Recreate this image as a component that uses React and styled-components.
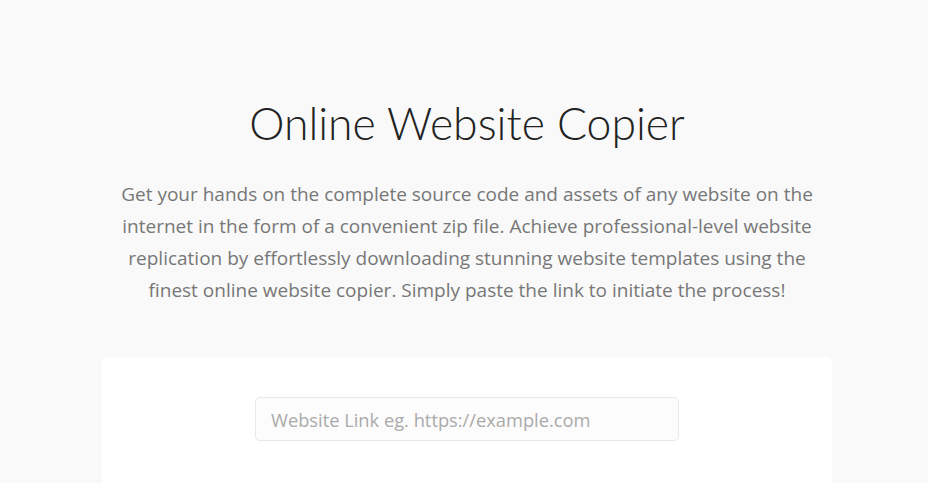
import styled, { createGlobalStyle } from 'styled-components';

const GlobalStyle = createGlobalStyle`
  body {
    margin: 0;
    background: #f9f9f9;
    font-family: "Open Sans", "Liberation Sans", sans-serif;
  }
`;

const Page = styled.main`
  display: flex;
  flex-direction: column;
  align-items: center;
  padding: 94px 0 0 6px;
`;

const Title = styled.h1`
  margin: 0;
  font-family: "Lato", "Open Sans", sans-serif;
  font-weight: 300;
  font-size: 44.5px;
  line-height: 58px;
  color: #222;
`;

const Lead = styled.p`
  margin: 26px 0 0;
  width: 720px;
  text-align: center;
  font-size: 19px;
  line-height: 32px;
  color: #777;
`;

const Card = styled.section`
  margin-top: 51px;
  width: 730px;
  box-sizing: border-box;
  background: #fff;
  border-radius: 6px;
  padding: 40px 0 60px;
  display: flex;
  justify-content: center;
`;

const LinkInput = styled.input`
  width: 424px;
  height: 44px;
  box-sizing: border-box;
  padding: 0 15px;
  border: 1px solid #e8e8e8;
  border-radius: 5px;
  background: #fcfcfc;
  font-family: "Open Sans", sans-serif;
  font-size: 18.3px;
  color: #444;
  outline: none;

  &::placeholder {
    color: #aaa;
  }
`;

export default function App() {
  return (
    <>
      <GlobalStyle />
      <Page>
        <Title>Online Website Copier</Title>
        <Lead>
          Get your hands on the complete source code and assets of any website on the
          internet in the form of a convenient zip file. Achieve professional-level website
          replication by effortlessly downloading stunning website templates using the
          finest online website copier. Simply paste the link to initiate the process!
        </Lead>
        <Card>
          <LinkInput type="text" placeholder="Website Link eg. https://example.com" />
        </Card>
      </Page>
    </>
  );
}
